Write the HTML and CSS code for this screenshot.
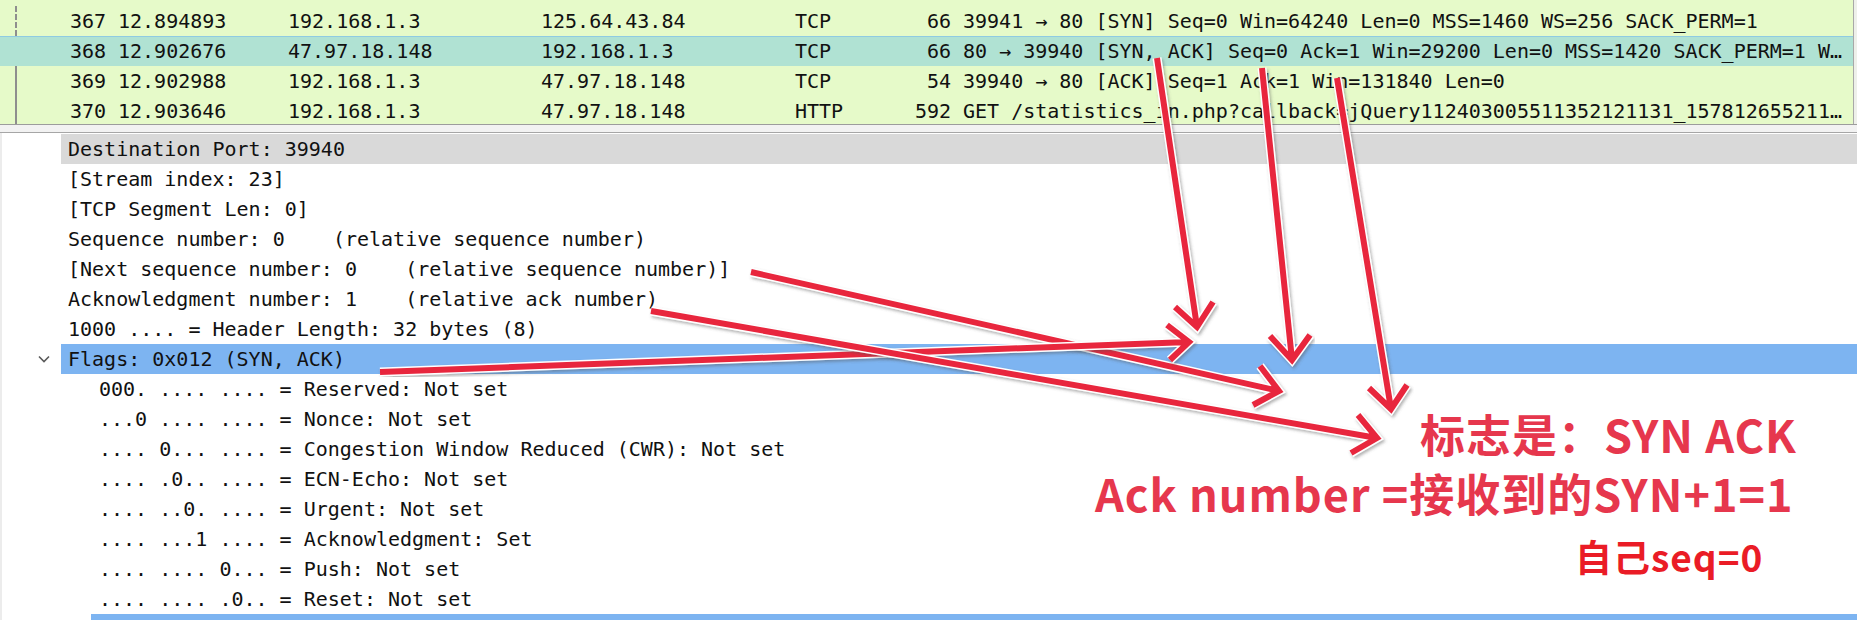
FILE: index.html
```html
<!DOCTYPE html>
<html lang="zh-CN">
<head>
<meta charset="utf-8">
<title>Wireshark TCP SYN-ACK</title>
<link rel="stylesheet" href="styles.css">
</head>
<body>
<div class="screen">
  <div class="list-wrap">
    <div class="packet-list">
      <div class="prow conv-first"><span class="c-no">367</span><span class="c-time">12.894893</span><span class="c-src">192.168.1.3</span><span class="c-dst">125.64.43.84</span><span class="c-proto">TCP</span><span class="c-len">66</span><span class="c-info">39941 → 80 [SYN] Seq=0 Win=64240 Len=0 MSS=1460 WS=256 SACK_PERM=1</span></div>
      <div class="prow selected"><span class="c-no">368</span><span class="c-time">12.902676</span><span class="c-src">47.97.18.148</span><span class="c-dst">192.168.1.3</span><span class="c-proto">TCP</span><span class="c-len">66</span><span class="c-info">80 → 39940 [SYN, ACK] Seq=0 Ack=1 Win=29200 Len=0 MSS=1420 SACK_PERM=1 W…</span></div>
      <div class="prow conv"><span class="c-no">369</span><span class="c-time">12.902988</span><span class="c-src">192.168.1.3</span><span class="c-dst">47.97.18.148</span><span class="c-proto">TCP</span><span class="c-len">54</span><span class="c-info">39940 → 80 [ACK] Seq=1 Ack=1 Win=131840 Len=0</span></div>
      <div class="prow conv"><span class="c-no">370</span><span class="c-time">12.903646</span><span class="c-src">192.168.1.3</span><span class="c-dst">47.97.18.148</span><span class="c-proto">HTTP</span><span class="c-len">592</span><span class="c-info">GET /statistics_in.php?callback=jQuery112403005511352121131_157812655211…</span></div>
    </div>
    <div class="minimap"></div>
  </div>
  <div class="splitter"></div>
  <div class="details">
    <div class="drow"><span class="gutter"></span><span class="dtxt shaded">Destination Port: 39940</span></div>
    <div class="drow"><span class="gutter"></span><span class="dtxt">[Stream index: 23]</span></div>
    <div class="drow"><span class="gutter"></span><span class="dtxt">[TCP Segment Len: 0]</span></div>
    <div class="drow"><span class="gutter"></span><span class="dtxt">Sequence number: 0    (relative sequence number)</span></div>
    <div class="drow"><span class="gutter"></span><span class="dtxt">[Next sequence number: 0    (relative sequence number)]</span></div>
    <div class="drow"><span class="gutter"></span><span class="dtxt">Acknowledgment number: 1    (relative ack number)</span></div>
    <div class="drow"><span class="gutter"></span><span class="dtxt">1000 .... = Header Length: 32 bytes (8)</span></div>
    <div class="drow"><span class="gutter"><svg class="chev" width="12" height="8" viewBox="0 0 12 8"><polyline points="1,1.5 6,6.5 11,1.5" fill="none" stroke="#5a5a5a" stroke-width="1.6"/></svg></span><span class="dtxt active">Flags: 0x012 (SYN, ACK)</span></div>
    <div class="drow child"><span class="gutter"></span><span class="dtxt">000. .... .... = Reserved: Not set</span></div>
    <div class="drow child"><span class="gutter"></span><span class="dtxt">...0 .... .... = Nonce: Not set</span></div>
    <div class="drow child"><span class="gutter"></span><span class="dtxt">.... 0... .... = Congestion Window Reduced (CWR): Not set</span></div>
    <div class="drow child"><span class="gutter"></span><span class="dtxt">.... .0.. .... = ECN-Echo: Not set</span></div>
    <div class="drow child"><span class="gutter"></span><span class="dtxt">.... ..0. .... = Urgent: Not set</span></div>
    <div class="drow child"><span class="gutter"></span><span class="dtxt">.... ...1 .... = Acknowledgment: Set</span></div>
    <div class="drow child"><span class="gutter"></span><span class="dtxt">.... .... 0... = Push: Not set</span></div>
    <div class="drow child"><span class="gutter"></span><span class="dtxt">.... .... .0.. = Reset: Not set</span></div>
    <div class="drow child"><span class="gutter"></span><span class="dtxt active"></span></div>
  </div>

  <svg class="annot" width="1857" height="620" viewBox="0 0 1857 620">
    <defs>
      <filter id="sh" x="-10%" y="-10%" width="120%" height="120%">
        <feDropShadow dx="1.5" dy="2" stdDeviation="1.8" flood-color="#555" flood-opacity="0.45"/>
      </filter>
    </defs>
    <g class="arrow" filter="url(#sh)">
      <path class="edge" d="M751,272 L1279,391 M1260,366 L1279,391 L1253,405"/>
      <path class="ink" d="M751,272 L1279,391 M1260,366 L1279,391 L1253,405"/>
    </g>
    <g class="arrow" filter="url(#sh)">
      <path class="edge" d="M380,372 L1189,342 M1167,325 L1189,342 L1170,360"/>
      <path class="ink" d="M380,372 L1189,342 M1167,325 L1189,342 L1170,360"/>
    </g>
    <g class="arrow" filter="url(#sh)">
      <path class="edge" d="M651,311 L1377,438 M1358,415 L1377,438 L1351,453"/>
      <path class="ink" d="M651,311 L1377,438 M1358,415 L1377,438 L1351,453"/>
    </g>
    <g class="arrow" filter="url(#sh)">
      <path class="edge" d="M1157,58 L1197,327 M1175,307 L1197,327 L1213,302"/>
      <path class="ink" d="M1157,58 L1197,327 M1175,307 L1197,327 L1213,302"/>
    </g>
    <g class="arrow" filter="url(#sh)">
      <path class="edge" d="M1262,68 L1292,360 M1270,336 L1292,360 L1310,335"/>
      <path class="ink" d="M1262,68 L1292,360 M1270,336 L1292,360 L1310,335"/>
    </g>
    <g class="arrow" filter="url(#sh)">
      <path class="edge" d="M1337,78 L1391,409 M1369,388 L1391,409 L1407,385"/>
      <path class="ink" d="M1337,78 L1391,409 M1369,388 L1391,409 L1407,385"/>
    </g>
  </svg>
  <div class="note note-flags">标志是：SYN ACK</div>
  <div class="note note-ack">Ack number =接收到的SYN+1=1</div>
  <div class="note note-seq">自己seq=0</div>
</div>
</body>
</html>
```

FILE: styles.css
```css
* { box-sizing: border-box; }

html, body {
  margin: 0;
  padding: 0;
  background: #ffffff;
}

.screen {
  position: relative;
  width: 1857px;
  height: 620px;
  overflow: hidden;
  display: flex;
  flex-direction: column;
  font-family: "DejaVu Sans Mono", "Liberation Mono", monospace;
  font-size: 20px;
  color: #111;
}

/* ---------- packet list ---------- */
.list-wrap {
  display: flex;
  height: 125px;
  flex: none;
  border-bottom: 1px solid #9c9c9c;
}

.packet-list {
  flex: 1;
  min-width: 0;
  background: #e6fac9;
  padding-top: 6px;
  overflow: hidden;
}

.minimap {
  width: 4px;
  flex: none;
  background: #eef0ea;
  border-left: 1px solid #a8a8a8;
}

.prow {
  position: relative;
  display: grid;
  grid-template-columns: 48px 182px 253px 254px 108px 48px minmax(0, 1fr);
  padding-left: 58px;
  height: 30px;
  line-height: 30px;
  white-space: pre;
}

.prow.conv::before,
.prow.conv-first::before {
  content: "";
  position: absolute;
  left: 15px;
  top: 0;
  bottom: 0;
  border-left: 2px solid #8e8e8e;
}

.prow.conv-first::before {
  border-left-style: dashed;
}

.prow.selected {
  background: #b0e2d3;
  border-top: 1px solid #8fcbe2;
  line-height: 28px;
}

.c-no, .c-len { text-align: right; }
.c-time, .c-info { padding-left: 12px; }
.c-info { overflow: hidden; }

/* ---------- splitter ---------- */
.splitter {
  height: 8px;
  flex: none;
  background: #f2f2f2;
  border-bottom: 1px solid #a6a6a6;
}

/* ---------- details tree ---------- */
.details {
  flex: 1;
  padding-top: 1px;
  background: #fff;
  border-left: 2px solid #ececec;
  overflow: hidden;
}

.drow {
  display: flex;
  height: 30px;
  line-height: 30px;
  white-space: pre;
}

.gutter {
  flex: none;
  width: 59px;
  display: flex;
  align-items: center;
  padding-left: 36px;
}

.drow.child .gutter { width: 89px; }

.chev { display: block; margin-top: -1px; }

.dtxt {
  flex: 1;
  padding-left: 7px;
}

.drow.child .dtxt { padding-left: 8px; }

.dtxt.shaded { background: #d9d9d9; }
.dtxt.active { background: #7db4f1; }

/* ---------- annotations ---------- */
.annot {
  position: absolute;
  left: 0;
  top: 0;
  pointer-events: none;
}

.arrow path {
  fill: none;
  stroke-linejoin: miter;
  stroke-linecap: butt;
}

.arrow .edge {
  stroke: #ffffff;
  stroke-width: 9;
}

.arrow .ink {
  stroke: #e8263d;
  stroke-width: 6;
}

.note {
  position: absolute;
  font-family: "Noto Sans CJK SC", "Noto Sans", sans-serif;
  font-weight: 700;
  white-space: nowrap;
  line-height: 1;
}

.note-flags {
  left: 1420px;
  top: 411px;
  font-size: 45px;
  color: #e6374d;
  letter-spacing: 1px;
}

.note-ack {
  left: 1095px;
  top: 470px;
  font-size: 45px;
  color: #e6374d;
  letter-spacing: 1px;
}

.note-seq {
  left: 1575px;
  top: 538px;
  font-size: 37px;
  color: #ea1c26;
  letter-spacing: 1px;
}
```
